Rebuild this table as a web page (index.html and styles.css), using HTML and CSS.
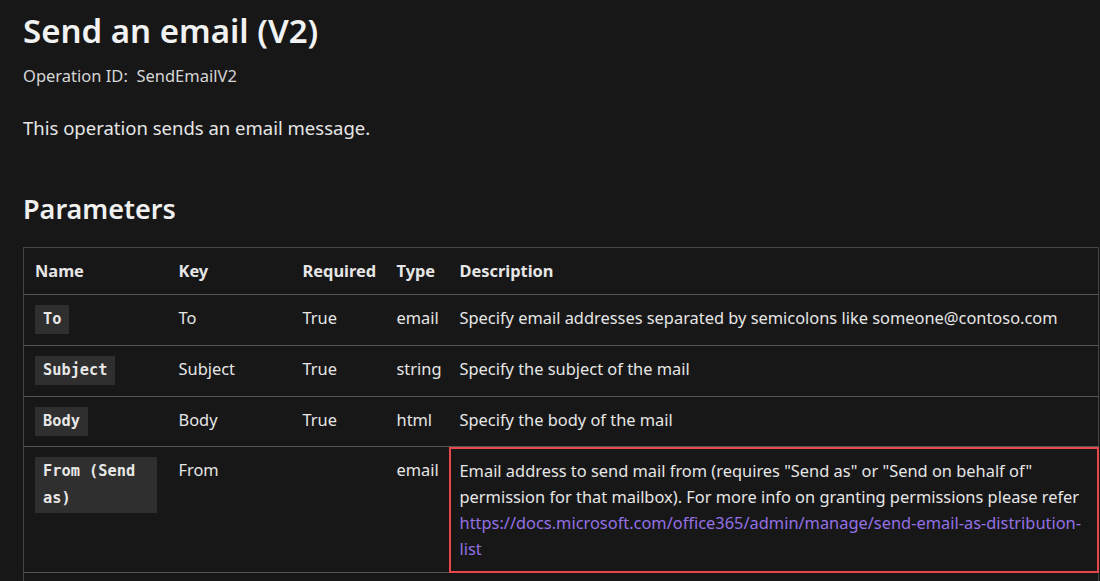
FILE: index.html
```html
<!DOCTYPE html>
<html lang="en">
<head>
<meta charset="utf-8">
<title>Send an email (V2)</title>
<link rel="stylesheet" href="styles.css">
</head>
<body>
<main class="content">
  <h1 class="title">Send an email (V2)</h1>
  <div class="op-id">Operation ID:&nbsp; SendEmailV2</div>
  <p class="summary">This operation sends an email message.</p>
  <h2 class="section">Parameters</h2>
  <table class="params">
    <colgroup>
      <col class="c-name"><col class="c-key"><col class="c-req"><col class="c-type"><col class="c-desc">
    </colgroup>
    <thead>
      <tr><th>Name</th><th>Key</th><th>Required</th><th>Type</th><th>Description</th></tr>
    </thead>
    <tbody>
      <tr><td><code class="code">To</code></td><td>To</td><td>True</td><td>email</td><td>Specify email addresses separated by semicolons like someone@contoso.com</td></tr>
      <tr><td><code class="code">Subject</code></td><td>Subject</td><td>True</td><td>string</td><td>Specify the subject of the mail</td></tr>
      <tr class="short"><td><code class="code">Body</code></td><td>Body</td><td>True</td><td>html</td><td>Specify the body of the mail</td></tr>
      <tr><td><code class="code">From (Send as)</code></td><td>From</td><td></td><td>email</td><td class="highlight">Email address to send mail from (requires "Send as" or "Send on behalf of" permission for that mailbox). For more info on granting permissions please refer <a class="link" href="#">https://docs.microsoft.com/office365/admin/manage/send-email-as-distribution-list</a></td></tr>
      <tr class="cut"><td></td><td></td><td></td><td></td><td></td></tr>
    </tbody>
  </table>
</main>
</body>
</html>
```
FILE: styles.css
```css
html, body {
  margin: 0;
  padding: 0;
  background: #171717;
}
body {
  color: #e6e6e6;
  font-family: "Noto Sans", "Open Sans", sans-serif;
  overflow: hidden;
  height: 581px;
}
.content {
  padding: 0 0 0 23px;
}
.title {
  margin: 0;
  padding-top: 9px;
  font-size: 33px;
  line-height: 44px;
  font-weight: 600;
  color: #f2f2f2;
}
.op-id {
  margin-top: 12px;
  font-size: 16.5px;
  line-height: 22px;
  color: #d6d6d6;
}
.summary {
  margin: 28px 0 0;
  font-size: 18.5px;
  line-height: 26px;
}
.section {
  margin: 50px 0 0;
  font-size: 27px;
  line-height: 36px;
  font-weight: 600;
  color: #f0f0f0;
}
.params {
  margin-top: 20px;
  width: 1075px;
  border-collapse: collapse;
  table-layout: fixed;
  border: 1px solid #444;
  font-size: 16.4px;
}
.c-name { width: 144px; }
.c-key { width: 124px; }
.c-req { width: 94px; }
.c-type { width: 63px; }
.c-desc { width: 650px; }
.params th {
  text-align: left;
  font-weight: 700;
  padding: 11px 11px;
  line-height: 24px;
  border-bottom: 1px solid #555;
}
.params td {
  vertical-align: top;
  padding: 10px 11px 11px;
  line-height: 26px;
  border-bottom: 1px solid #555;
}
.params tr.short td {
  padding-bottom: 10px;
}
.params td.highlight {
  padding-top: 11px;
  padding-bottom: 10px;
}
.code {
  display: inline-block;
  vertical-align: top;
  font-family: "DejaVu Sans Mono", "Liberation Mono", monospace;
  font-weight: 700;
  font-size: 15.3px;
  line-height: 27px;
  padding: 1px 8px;
  background: #2f2f2f;
  color: #e8e8e8;
}
.highlight {
  outline: 2px solid #e8474c;
  outline-offset: -2px;
}
.link {
  color: #9470e6;
  text-decoration: none;
}
.cut td {
  height: 30px;
}
```
